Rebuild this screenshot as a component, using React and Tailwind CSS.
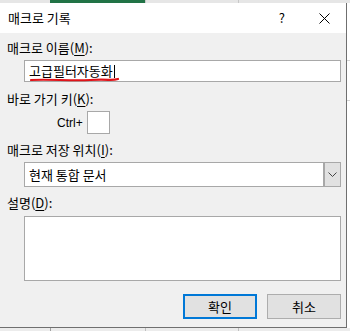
const FONT = { fontFamily: '"Noto Sans CJK KR", "Noto Sans", sans-serif' }

const Label = ({ text, hotkey, className = "" }) => (
  <div className={`h-[16px] leading-[16px] text-[13px] text-black ${className}`}>
    {text}(<span className="underline underline-offset-2">{hotkey}</span>):
  </div>
)

const CloseIcon = () => (
  <svg width="11" height="11" viewBox="0 0 11 11">
    <path d="M0.5 0.5 L10.5 10.5 M10.5 0.5 L0.5 10.5" stroke="#000" strokeWidth="1" fill="none" />
  </svg>
)

const Chevron = () => (
  <svg width="9" height="5" viewBox="0 0 9 5">
    <polyline points="0.5,0.5 4.5,4.5 8.5,0.5" stroke="#444" strokeWidth="1" fill="none" />
  </svg>
)

const App = () => {
  return (
    <div className="w-[350px] h-[331px] flex flex-col bg-[#e8e8e8] overflow-hidden" style={FONT}>
      {/* sheet header peeking above the dialog */}
      <div className="h-[3px] flex shrink-0 bg-[#e6e6e6]">
        <div className="w-[50px]" />
        <div className="w-[95px] bg-[#217346]" />
        <div className="w-[93px] border-l border-[#c8c8c8]" />
        <div className="flex-1 border-l border-[#c8c8c8]" />
      </div>

      <div className="flex h-[325px] shrink-0">
        <div className="w-[347px] flex flex-col border-r border-b border-[#6f6f6f]">
          <div className="h-[30px] bg-white flex items-center pl-[8px] pr-[16px] shrink-0">
            <span className="text-[13px] leading-[16px] text-black flex-1">매크로 기록</span>
            <span className="text-[13px] leading-[16px] text-black mr-[34px]">?</span>
            <CloseIcon />
          </div>

          <div className="flex-1 bg-[#f0f0f0] pl-[7px] pr-[5px] pt-[7px] flex flex-col">
            <Label text="매크로 이름" hotkey="M" />
            <div className="relative mt-[4px] ml-[17px] h-[22px] bg-white border border-[#a8a8a8] flex items-center pl-[4px]">
              <span className="text-[13px] leading-[16px] text-black">고급필터자동화</span>
              <div className="w-[1px] h-[13px] bg-black ml-[1px]" />
              <svg className="absolute left-[5px] top-[16px]" width="92" height="6" viewBox="0 0 92 6">
                <path d="M1 3 C 20 2, 40 4, 60 3 S 82 4, 88 2" stroke="#e0141a" strokeWidth="2.2" fill="none" strokeLinecap="round" />
              </svg>
            </div>

            <Label text="바로 가기 키" hotkey="K" className="mt-[9px]" />
            <div className="mt-[4px] ml-[50px] flex items-center gap-[4px]">
              <span className="text-[12px] leading-[16px] text-black" style={{ fontFamily: '"Liberation Sans", sans-serif' }}>
                Ctrl+
              </span>
              <div className="w-[23px] h-[23px] bg-white border border-[#a8a8a8]" />
            </div>

            <Label text="매크로 저장 위치" hotkey="I" className="mt-[8px]" />
            <div className="mt-[4px] ml-[17px] h-[25px] bg-white border border-[#a8a8a8] flex">
              <div className="flex-1 flex items-center pl-[4px] text-[13px] leading-[16px] text-black">현재 통합 문서</div>
              <div className="w-[17px] bg-[#e1e1e1] border-l-2 border-[#a8a8a8] flex items-center justify-center">
                <Chevron />
              </div>
            </div>

            <Label text="설명" hotkey="D" className="mt-[8px]" />
            <div className="mt-[5px] ml-[17px] h-[65px] bg-white border border-[#a8a8a8]" />

            <div className="mt-[13px] flex justify-end gap-[10px]">
              <button className="w-[74px] h-[25px] bg-[#e1e1e1] border-2 border-[#0078d7] text-[13px] leading-[16px] text-black">
                확인
              </button>
              <button className="w-[74px] h-[25px] bg-[#e1e1e1] border border-[#adadad] text-[13px] leading-[16px] text-black">
                취소
              </button>
            </div>
          </div>
        </div>

        {/* sheet cells to the right */}
        <div className="flex-1 bg-white flex flex-col">
          <div className="h-[58px] border-b border-[#d4d4d4]" />
          <div className="h-[40px] border-b border-[#d4d4d4]" />
          <div className="flex-1" />
        </div>
      </div>

      {/* sheet cells below */}
      <div className="flex-1 flex bg-[#ececec]">
        <div className="w-[50px]" />
        <div className="w-[95px] border-l border-[#a0a0a0]" />
        <div className="w-[93px] border-l border-[#c0c0c0]" />
        <div className="flex-1 border-l border-[#c0c0c0]" />
      </div>
    </div>
  )
}

export default App
